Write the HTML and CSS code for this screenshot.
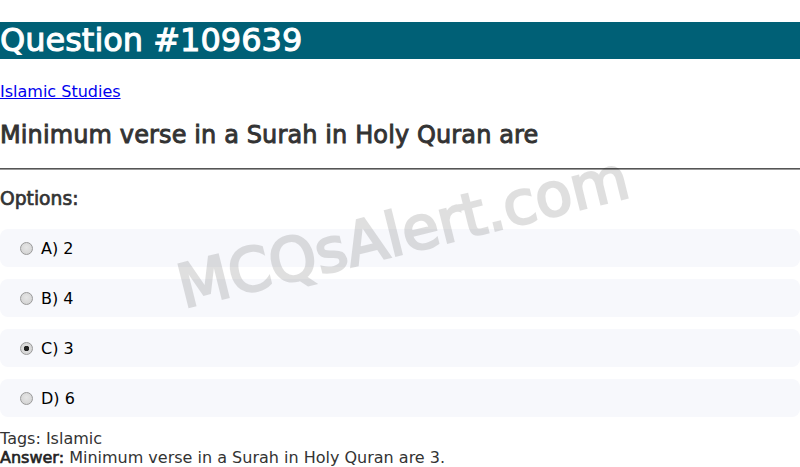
FILE: index.html
```html
<!DOCTYPE html>
<html>
<head>
<meta charset="utf-8">
<link rel="stylesheet" href="styles.css">
</head>
<body>
<h1 class="title">Question #109639</h1>
<p class="cat"><a href="#">Islamic Studies</a></p>
<h2 class="question">Minimum verse in a Surah in Holy Quran are</h2>
<hr class="sep">
<h3 class="opts-title">Options:</h3>
<div class="option"><label class="opt-label"><input type="radio" name="q" class="radio"><span>A) 2</span></label></div>
<div class="option"><label class="opt-label"><input type="radio" name="q" class="radio"><span>B) 4</span></label></div>
<div class="option"><label class="opt-label"><input type="radio" name="q" class="radio" checked><span>C) 3</span></label></div>
<div class="option"><label class="opt-label"><input type="radio" name="q" class="radio"><span>D) 6</span></label></div>
<div class="meta">Tags: Islamic</div>
<div class="meta"><b class="ans">Answer:</b> Minimum verse in a Surah in Holy Quran are 3.</div>
<div class="watermark">MCQsAlert.com</div>
</body>
</html>
```
FILE: styles.css
```css
html, body {
  margin: 0;
  padding: 0;
  background: #fff;
  font-family: "DejaVu Sans", sans-serif;
  font-size: 16px;
  overflow: hidden;
}
.title {
  margin: 22px 0 23px;
  background: #006076;
  color: #fff;
  font-size: 32px;
  font-weight: normal;
  -webkit-text-stroke: 1px #fff;
  line-height: 37px;
}
.cat {
  margin: 0;
  line-height: 19px;
}
.cat a {
  color: #0000ee;
}
.question {
  margin: 20px 0 19px;
  font-size: 24px;
  line-height: 28px;
  font-weight: normal;
  color: #333;
  letter-spacing: 0.12px;
  -webkit-text-stroke: 0.9px #333;
}
.sep {
  margin: 0;
  border: 0;
  border-top: 1px solid #555;
  border-bottom: 1px solid #999;
  height: 0;
}
.opts-title {
  margin: 18px 0 19px;
  font-size: 18.72px;
  line-height: 22px;
  color: #333;
  font-weight: normal;
  -webkit-text-stroke: 0.7px #333;
}
.option {
  background: #f7f8fc;
  border-radius: 8px;
  height: 38px;
  box-sizing: border-box;
  padding: 0 15px;
  margin-bottom: 12px;
  display: flex;
  align-items: center;
  color: #000;
}
.opt-label {
  display: flex;
  align-items: center;
  line-height: 19px;
  padding-top: 1px;
}
.radio {
  -webkit-appearance: none;
  appearance: none;
  width: 13px;
  height: 13px;
  margin: -1px 8px 0 5px;
  box-sizing: border-box;
  border: 1px solid #9a9a9a;
  border-radius: 50%;
  background: radial-gradient(circle at 50% 40%, #e6e6e6, #cfcfcf);
  flex: none;
}
.radio:checked {
  background: radial-gradient(circle, #222 0, #222 2.5px, #dcdcdc 3px, #cfcfcf 100%);
}
.meta {
  color: #333;
  line-height: 19px;
}
.ans {
  font-weight: normal;
  color: #222;
  -webkit-text-stroke: 0.6px #222;
}
.watermark {
  position: absolute;
  left: 403px;
  top: 232px;
  transform: translate(-50%, -50%) rotate(-14deg);
  font-size: 60px;
  font-weight: normal;
  color: #000;
  -webkit-text-stroke: 2.5px #000;
  opacity: 0.12;
  white-space: nowrap;
  pointer-events: none;
}
```
